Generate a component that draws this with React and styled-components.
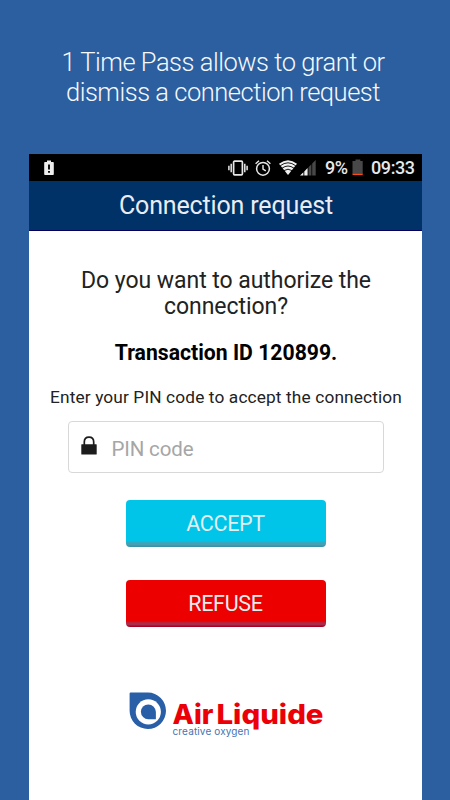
import React from 'react';
import styled, {createGlobalStyle} from 'styled-components';

const GlobalStyle = createGlobalStyle`
    *{box-sizing: border-box;}

    body{
        margin: 0;
        background-color: #2b5f9f;
        font-family: Roboto, sans-serif;
        overflow: hidden;
    }
`;

const Page = styled.div`
    width: 450px;
    height: 800px;
    padding-top: 47px;
    display: flex;
    flex-direction: column;
    align-items: center;
    overflow: hidden;
    background-color: #2b5f9f;
`;

const Headline = styled.h1`
    margin: 0;
    padding-right: 4px;
    height: 107px;
    color: #f5f8fc;
    font-weight: 300;
    font-size: 25.5px;
    line-height: 30px;
    letter-spacing: -0.48px;
    text-align: center;
    white-space: nowrap;

    span{display: block;}
`;

const Phone = styled.div`
    width: 393px;
    height: 646px;
    margin-left: 1px;
    display: flex;
    flex-direction: column;
    background-color: #fff;
`;

const StatusBar = styled.div`
    height: 27px;
    padding: 0 8px 0 14px;
    display: flex;
    align-items: center;
    background-color: #000;
    color: #e8e8e8;
    line-height: 27px;

    svg{display: block; flex: none;}
`;

const StatusIcons = styled.div`
    margin-left: auto;
    display: flex;
    align-items: center;

    svg{margin-left: 7px;}
    svg + svg + svg{margin-left: 8px;}
    svg + svg + svg + svg{margin-left: 3px;}
    span + svg{margin-left: 4px;}
`;

const StatusText = styled.span`
    width: ${props => props.$width}px;
    margin-left: ${props => props.$gap}px;
    font-size: 18px;
    font-weight: 500;
    letter-spacing: -0.4px;
    white-space: nowrap;
`;

const Header = styled.header`
    height: 50px;
    padding-left: 1px;
    background-color: #003167;
    border-bottom: 1px solid #00005e;
    color: #e9edf2;
    font-size: 25px;
    line-height: 49px;
    text-align: center;
    letter-spacing: -0.15px;
`;

const Content = styled.main`
    display: flex;
    flex-direction: column;
    align-items: center;
    color: #222;
    text-align: center;
`;

const Question = styled.h2`
    margin: 37px 0 0;
    padding-left: 1px;
    font-size: 23px;
    font-weight: 400;
    line-height: 25.5px;
    letter-spacing: -0.05px;
`;

const Transaction = styled.p`
    margin: 21px 0 0;
    padding-left: 1px;
    color: #000;
    font-size: 21.2px;
    font-weight: 700;
    line-height: 25px;
`;

const Hint = styled.p`
    margin: 22px 0 0;
    padding-left: 1px;
    font-size: 17.3px;
    line-height: 20px;
    letter-spacing: 0.13px;
    white-space: nowrap;
`;

const PinField = styled.label`
    width: 316px;
    height: 52px;
    margin: 14px 0 0;
    padding: 0 12px;
    display: flex;
    align-items: center;
    border: 1px solid #d8d8d8;
    border-radius: 4px;

    svg{flex: none; margin-bottom: 3px;}

    input{
        width: 240px;
        margin: 4px 0 0 15px;
        padding: 0;
        border: 0;
        outline: none;
        background: none;
        font: 400 20.5px/24px Roboto, sans-serif;
        letter-spacing: -0.15px;
    }

    input::placeholder{color: #a6a6a6; opacity: 1;}
`;

const Button = styled.button`
    width: 200px;
    height: 47px;
    margin-top: ${props => props.$top}px;
    padding: 0;
    border: 0;
    border-radius: 4px;
    background: linear-gradient(
        ${props => props.$color} 0 41px,
        ${props => props.$shade} 43px 45px,
        ${props => props.$edge} 46px
    );
    color: #e2eef0;
    font: 400 21.5px/46px Roboto, sans-serif;
    letter-spacing: -0.3px;
`;

const Brand = styled.div`
    width: 196px;
    height: 50px;
    margin: 65px 0 0 3px;

    svg{display: block;}
`;

const LowBattery = () => (
    <svg width="12" height="16" viewBox="0 0 12 16">
        <path d="M4 0.5h4v1.5h2q.8 0 .8.8v11.4q0 .8-.8.8H2q-.8 0-.8-.8V2.8Q1.2 2 2 2h2z" fill="#eee" />
        <path d="M5 4.5h2v5H5zM5 11h2v1.8H5z" fill="#111" />
    </svg>
);

const Vibrate = () => (
    <svg width="20" height="16" viewBox="0 0 20 16" fill="none" stroke="#e8e8e8">
        <rect x="5.6" y="1.2" width="8.8" height="13.6" rx="1" strokeWidth="1.7" />
        <path d="M3.2 3.8v8.4M16.8 3.8v8.4M.9 5.8v4.4M19.1 5.8v4.4" strokeWidth="1.5" />
    </svg>
);

const Alarm = () => (
    <svg width="16" height="16" viewBox="0 0 16 16" fill="none" stroke="#e8e8e8">
        <circle cx="8" cy="8.8" r="6.4" strokeWidth="1.5" />
        <path d="M8 5V9l2.8 1.8M.6 3.7 4 .8M15.4 3.7 12 .8" strokeWidth="1.4" />
    </svg>
);

const Wifi = () => (
    <svg width="18" height="15" viewBox="0 0 18 15">
        <path d="M0 3.8Q9-3.3 18 3.8L9 15z" fill="#f0f0f0" />
        <path d="M1.2 5.8Q9-.2 16.8 5.8M3 8.2Q9 3.8 15 8.2M5 10.6Q9 7.8 13 10.6" fill="none" stroke="#000" strokeWidth=".9" />
    </svg>
);

const Signal = () => (
    <svg width="16" height="16" viewBox="0 0 16 16">
        <path d="M0 15.5 3.4 12.3V15.5zM4.3 11.5 7.6 8.1V15.5H4.3z" fill="#f0f0f0" />
        <path d="M8.5 7.2 11.4 4.2V15.5H8.5zM12.2 3.4 15.7 0V15.5h-3.5z" fill="#484848" />
    </svg>
);

const Battery = () => (
    <svg width="12" height="17" viewBox="0 0 12 17">
        <path d="M3.5.5h4.8V2h2.4v12.8H.5V2h3z" fill="#484848" />
        <path d="M.5 14.6h10.2V16H.5z" fill="#ff4b12" />
    </svg>
);

const Lock = () => (
    <svg width="16" height="19" viewBox="0 0 16 19">
        <path d="M3.3 9V6Q3.3 1.2 8 1.2T12.7 6V9" fill="none" stroke="#1c1c1c" strokeWidth="1.7" />
        <rect x=".3" y="8.2" width="15.4" height="10.3" rx=".6" fill="#1c1c1c" />
    </svg>
);

const Logo = () => (
    <svg width="196" height="50" viewBox="0 0 196 50">
        <path d="M1.6.6H18.9A18.2 18.2 0 1 1 .6 18.8V1.6Q.6.6 1.6.6z" fill="#285fa7" />
        <circle cx="19.3" cy="19.8" r="12.6" fill="#fff" />
        <path d="M19.3 12.4A7.6 7.6 0 0 1 26.9 20V27.2H19.3A7.4 7.4 0 0 1 19.3 12.4z" fill="#285fa7" />
        <g fill="#eb0008" fontFamily="Inter, sans-serif" fontWeight="800" fontSize="27.5">
            <text x="43.5" y="32" textLength="41" lengthAdjust="spacingAndGlyphs">Air</text>
            <text x="87.5" y="32" textLength="107" lengthAdjust="spacingAndGlyphs">Liquide</text>
        </g>
        <text x="43.5" y="43" fill="#4774b3" fontFamily="Inter, sans-serif" fontSize="10" textLength="77">creative oxygen</text>
    </svg>
);

const App = () => {
    return (
        <>
            <GlobalStyle />
            <Page>
                <Headline>
                    <span>1 Time Pass allows to grant or</span>
                    <span>dismiss a connection request</span>
                </Headline>
                <Phone>
                    <StatusBar>
                        <LowBattery />
                        <StatusIcons>
                            <Vibrate />
                            <Alarm />
                            <Wifi />
                            <Signal />
                            <StatusText $width={23} $gap={9}>9%</StatusText>
                            <Battery />
                            <StatusText $width={43} $gap={7}>09:33</StatusText>
                        </StatusIcons>
                    </StatusBar>
                    <Header>Connection request</Header>
                    <Content>
                        <Question>Do you want to authorize the<br />connection?</Question>
                        <Transaction>Transaction ID 120899.</Transaction>
                        <Hint>Enter your PIN code to accept the connection</Hint>
                        <PinField>
                            <Lock />
                            <input type="text" placeholder="PIN code" />
                        </PinField>
                        <Button $top={27} $color="#00c5e8" $shade="#4a9eb2" $edge="#3793a8">ACCEPT</Button>
                        <Button $top={33} $color="#ec0000" $shade="#a82c4c" $edge="#a80020">REFUSE</Button>
                        <Brand><Logo /></Brand>
                    </Content>
                </Phone>
            </Page>
        </>
    );
};

export default App;
